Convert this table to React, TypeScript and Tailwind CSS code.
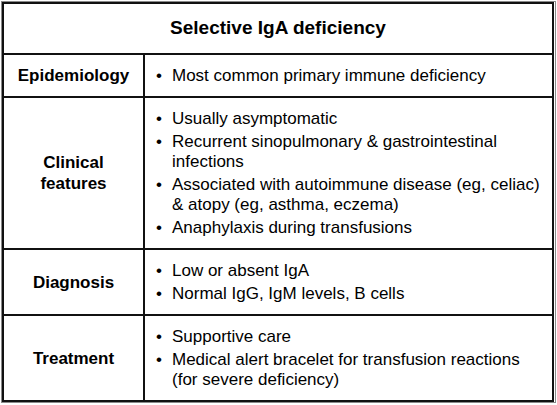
const rows: { label: string[]; items: string[][] }[] = [
  { label: ["Epidemiology"], items: [["Most common primary immune deficiency"]] },
  {
    label: ["Clinical", "features"],
    items: [
      ["Usually asymptomatic"],
      ["Recurrent sinopulmonary & gastrointestinal", "infections"],
      ["Associated with autoimmune disease (eg, celiac)", "& atopy (eg, asthma, eczema)"],
      ["Anaphylaxis during transfusions"],
    ],
  },
  { label: ["Diagnosis"], items: [["Low or absent IgA"], ["Normal IgG, IgM levels, B cells"]] },
  {
    label: ["Treatment"],
    items: [
      ["Supportive care"],
      ["Medical alert bracelet for transfusion reactions", "(for severe deficiency)"],
    ],
  },
];

export default function App() {
  return (
    <div className="w-[557px] h-[405px] bg-white p-px font-['Liberation_Sans',Arial,sans-serif] text-black">
      <div className="border border-[#8a8a8a]">
        <div className="w-[552px] border-2 border-[#111]">
          <div className="h-[49px] flex items-center justify-center font-bold text-[19px]">
            Selective IgA deficiency
          </div>
          {rows.map((row, i) => (
            <div key={i} className="grid grid-cols-[139px_1fr] border-t-2 border-[#111]">
              <div className="flex flex-col items-center justify-center font-bold text-[17px] leading-[21px] text-center">
                {row.label.map((l, j) => (
                  <span key={j}>{l}</span>
                ))}
              </div>
              <ul className="border-l-2 border-[#111] pl-[11px] pt-[11px] pb-[10px] flex flex-col gap-[3px] text-[17px] leading-[20px]">
                {row.items.map((item, j) => (
                  <li key={j} className="flex">
                    <span className="w-[16px] shrink-0">•</span>
                    <span>
                      {item.map((line, k) => (
                        <span key={k} className="block">
                          {line}
                        </span>
                      ))}
                    </span>
                  </li>
                ))}
              </ul>
            </div>
          ))}
        </div>
      </div>
    </div>
  );
}
